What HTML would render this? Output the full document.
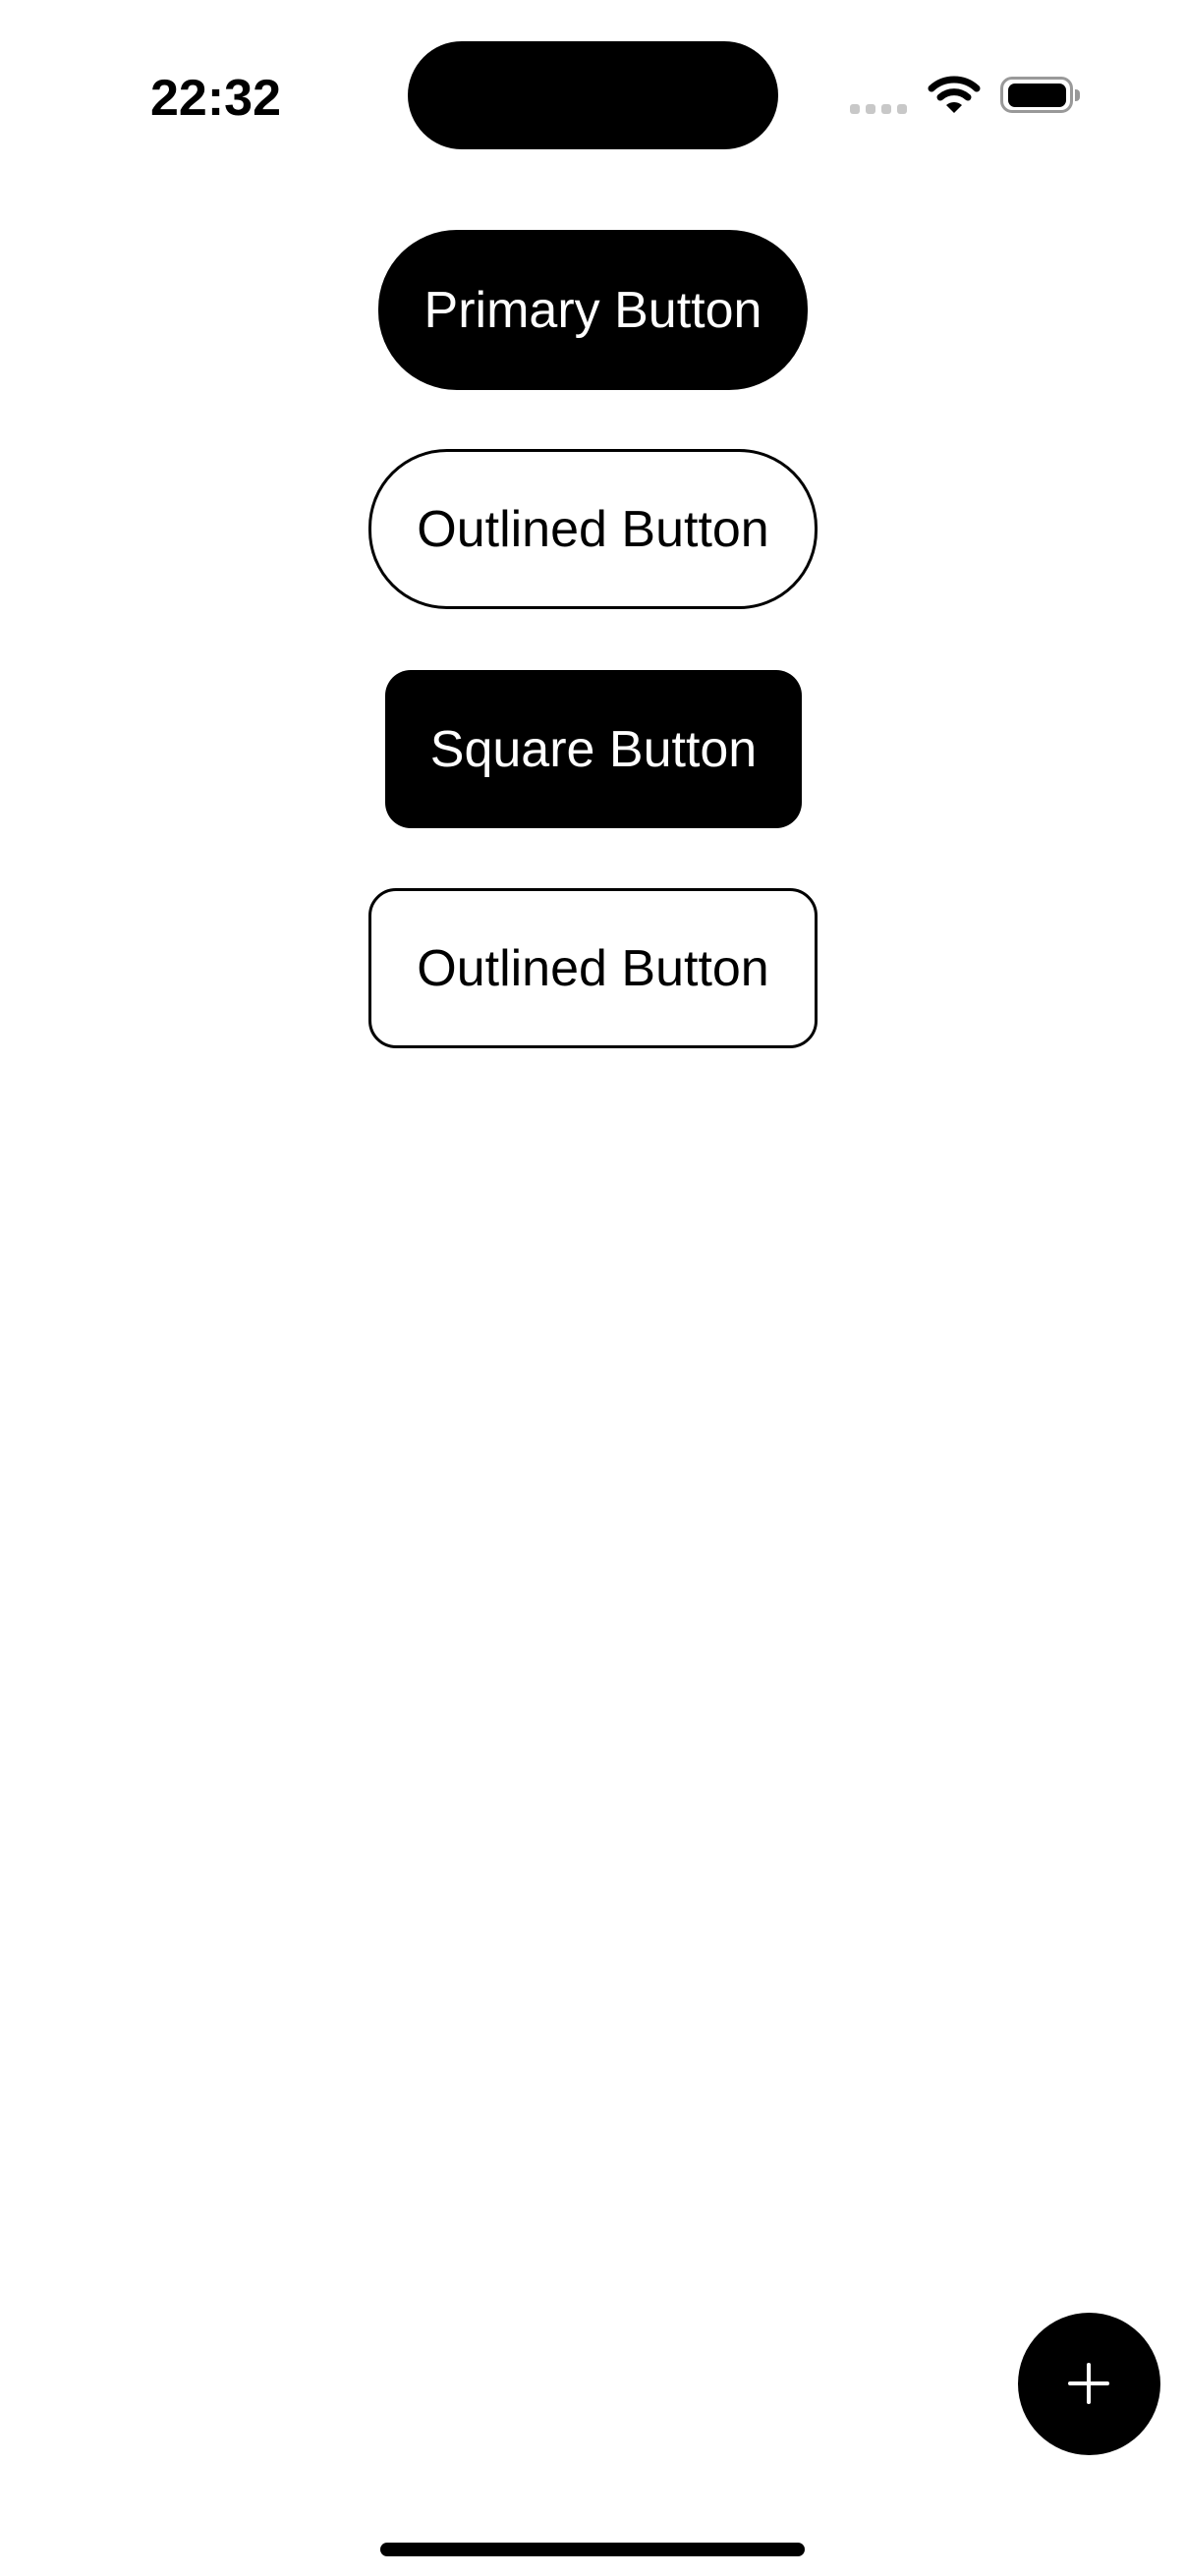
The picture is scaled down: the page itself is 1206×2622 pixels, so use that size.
<!DOCTYPE html>
<html><head><meta charset="utf-8"><style>
html,body{margin:0;padding:0;background:#fff;}
body{width:1206px;height:2622px;position:relative;overflow:hidden;font-family:"Liberation Sans",sans-serif;}
.abs{position:absolute;}
.btn{position:absolute;display:flex;align-items:center;justify-content:center;font-size:52px;box-sizing:border-box;}
</style></head><body>
<div class="abs" style="left:153px;top:70px;font-size:52px;font-weight:bold;">22:32</div>
<div class="abs" style="left:415px;top:42px;width:377px;height:110px;background:#000;border-radius:55px;"></div>
<div class="abs" style="left:865px;top:106px;width:10px;height:10px;background:#c8c8c8;border-radius:3px;"></div>
<div class="abs" style="left:881px;top:106px;width:10px;height:10px;background:#c8c8c8;border-radius:3px;"></div>
<div class="abs" style="left:897px;top:106px;width:10px;height:10px;background:#c8c8c8;border-radius:3px;"></div>
<div class="abs" style="left:913px;top:106px;width:10px;height:10px;background:#c8c8c8;border-radius:3px;"></div>
<svg class="abs" style="left:944px;top:76px" width="54" height="42" viewBox="0 0 54 42">
<path d="M4 14 A34 34 0 0 1 50 14" stroke="#000" stroke-width="7" fill="none" stroke-linecap="round"/>
<path d="M13 23 A21 21 0 0 1 41 23" stroke="#000" stroke-width="7" fill="none" stroke-linecap="round"/>
<path d="M19 31 L27 39 L35 31 A12 12 0 0 0 19 31Z" fill="#000"/>
</svg>
<div class="abs" style="left:1018px;top:78px;width:74px;height:37px;box-sizing:border-box;border:3px solid #999;border-radius:12px;"></div>
<div class="abs" style="left:1026px;top:85px;width:59px;height:24px;background:#000;border-radius:7px;"></div>
<div class="abs" style="left:1094px;top:91px;width:5px;height:12px;background:#999;border-radius:0 4px 4px 0;"></div>

<div class="btn" style="left:385px;top:234px;width:437px;height:163px;background:#000;color:#fff;border-radius:80px;">Primary Button</div>
<div class="btn" style="left:375px;top:457px;width:457px;height:163px;border:3px solid #000;color:#000;border-radius:80px;">Outlined Button</div>
<div class="btn" style="left:392px;top:682px;width:424px;height:161px;background:#000;color:#fff;border-radius:26px;">Square Button</div>
<div class="btn" style="left:375px;top:904px;width:457px;height:163px;border:3px solid #000;color:#000;border-radius:28px;">Outlined Button</div>

<div class="abs" style="left:1036px;top:2354px;width:145px;height:145px;background:#000;border-radius:50%;"></div>
<div class="abs" style="left:1087px;top:2424px;width:42px;height:4px;background:#fff;border-radius:2px;"></div>
<div class="abs" style="left:1106px;top:2405px;width:4px;height:42px;background:#fff;border-radius:2px;"></div>
<div class="abs" style="left:387px;top:2588px;width:432px;height:14px;background:#000;border-radius:7px;"></div>
</body></html>
